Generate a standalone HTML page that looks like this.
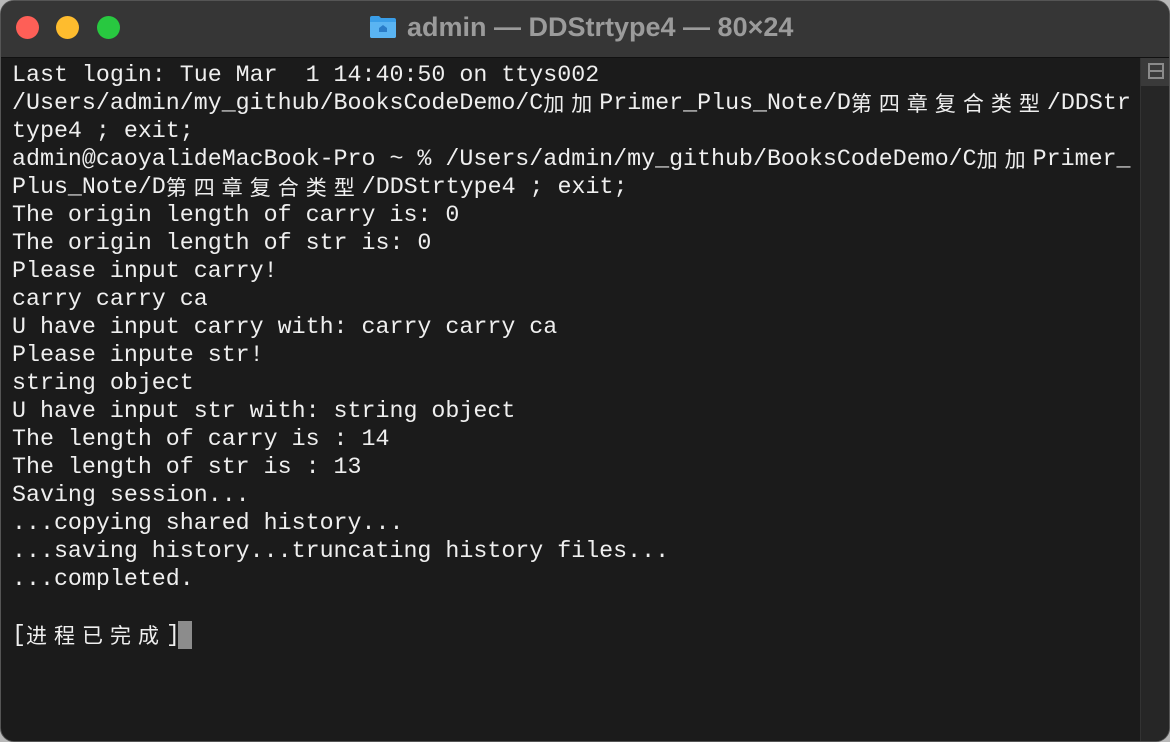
<!DOCTYPE html>
<html><head><meta charset="utf-8"><style>
html,body{margin:0;padding:0;width:1170px;height:742px;overflow:hidden;background:#b8b8b8;}
.win{position:absolute;left:0;top:0;width:1168px;height:740px;border-radius:14px;overflow:hidden;background:#1b1b1b;border:1px solid #555;}
.tb{position:absolute;left:0;top:0;width:100%;height:56px;background:#363636;border-bottom:1px solid #111;}
.dot{position:absolute;top:15px;width:23px;height:23px;border-radius:50%;}
.title{position:absolute;left:406px;top:11px;font:bold 27px "Liberation Sans",sans-serif;color:#9b9b9b;white-space:nowrap;}
.term{position:absolute;left:11px;top:60px;font:23.3px "Liberation Mono","Noto Sans CJK SC",monospace;color:#efefef;line-height:28px;white-space:pre;}
.c{display:inline-block;width:28px;font-family:"Noto Sans CJK SC",sans-serif;font-size:21px;text-align:left;vertical-align:top;}
.sb{position:absolute;left:1139px;top:57px;width:29px;height:684px;background:#262626;border-left:1px solid #333;}
.sbt{position:absolute;left:0;top:0;width:29px;height:28px;background:#3a3a3a;}
.cur{display:inline-block;width:14px;height:28px;background:#8c8c8c;vertical-align:top;margin-left:-2px}
</style></head><body>
<div class="win">
<div class="tb">
<div class="dot" style="left:15px;background:#fe5f57"></div>
<div class="dot" style="left:55px;background:#febc2e"></div>
<div class="dot" style="left:96px;background:#28c840"></div>
<svg style="position:absolute;left:368px;top:14px" width="28" height="24" viewBox="0 0 28 24"><path d="M1 3 Q1 1 3 1 H10 L12 3 H25 Q27 3 27 5 V21 Q27 23 25 23 H3 Q1 23 1 21Z" fill="#3a9ee8"/><path d="M1 7 H27 V21 Q27 23 25 23 H3 Q1 23 1 21Z" fill="#5ab4f2"/><path d="M10 17 V13 L14 10 L18 13 V17Z" fill="#2a7cc8"/></svg>
<div class="title">admin — DDStrtype4 — 80×24</div>
</div>
<div class="term">Last login: Tue Mar  1 14:40:50 on ttys002
/Users/admin/my_github/BooksCodeDemo/C<span class="c">加</span><span class="c">加</span>Primer_Plus_Note/D<span class="c">第</span><span class="c">四</span><span class="c">章</span><span class="c">复</span><span class="c">合</span><span class="c">类</span><span class="c">型</span>/DDStr
type4 ; exit;
admin@caoyalideMacBook-Pro ~ % /Users/admin/my_github/BooksCodeDemo/C<span class="c">加</span><span class="c">加</span>Primer_
Plus_Note/D<span class="c">第</span><span class="c">四</span><span class="c">章</span><span class="c">复</span><span class="c">合</span><span class="c">类</span><span class="c">型</span>/DDStrtype4 ; exit;
The origin length of carry is: 0
The origin length of str is: 0
Please input carry!
carry carry ca
U have input carry with: carry carry ca
Please inpute str!
string object
U have input str with: string object
The length of carry is : 14
The length of str is : 13
Saving session...
...copying shared history...
...saving history...truncating history files...
...completed.

[<span class="c">进</span><span class="c">程</span><span class="c">已</span><span class="c">完</span><span class="c">成</span>]<span class="cur"></span></div>
<div class="sb"><div class="sbt"><svg width="29" height="28"><rect x="8" y="6" width="14" height="14" fill="none" stroke="#8a8a8a" stroke-width="2"/><line x1="8" y1="13" x2="22" y2="13" stroke="#8a8a8a" stroke-width="2"/></svg></div></div>
</div>
</body></html>
